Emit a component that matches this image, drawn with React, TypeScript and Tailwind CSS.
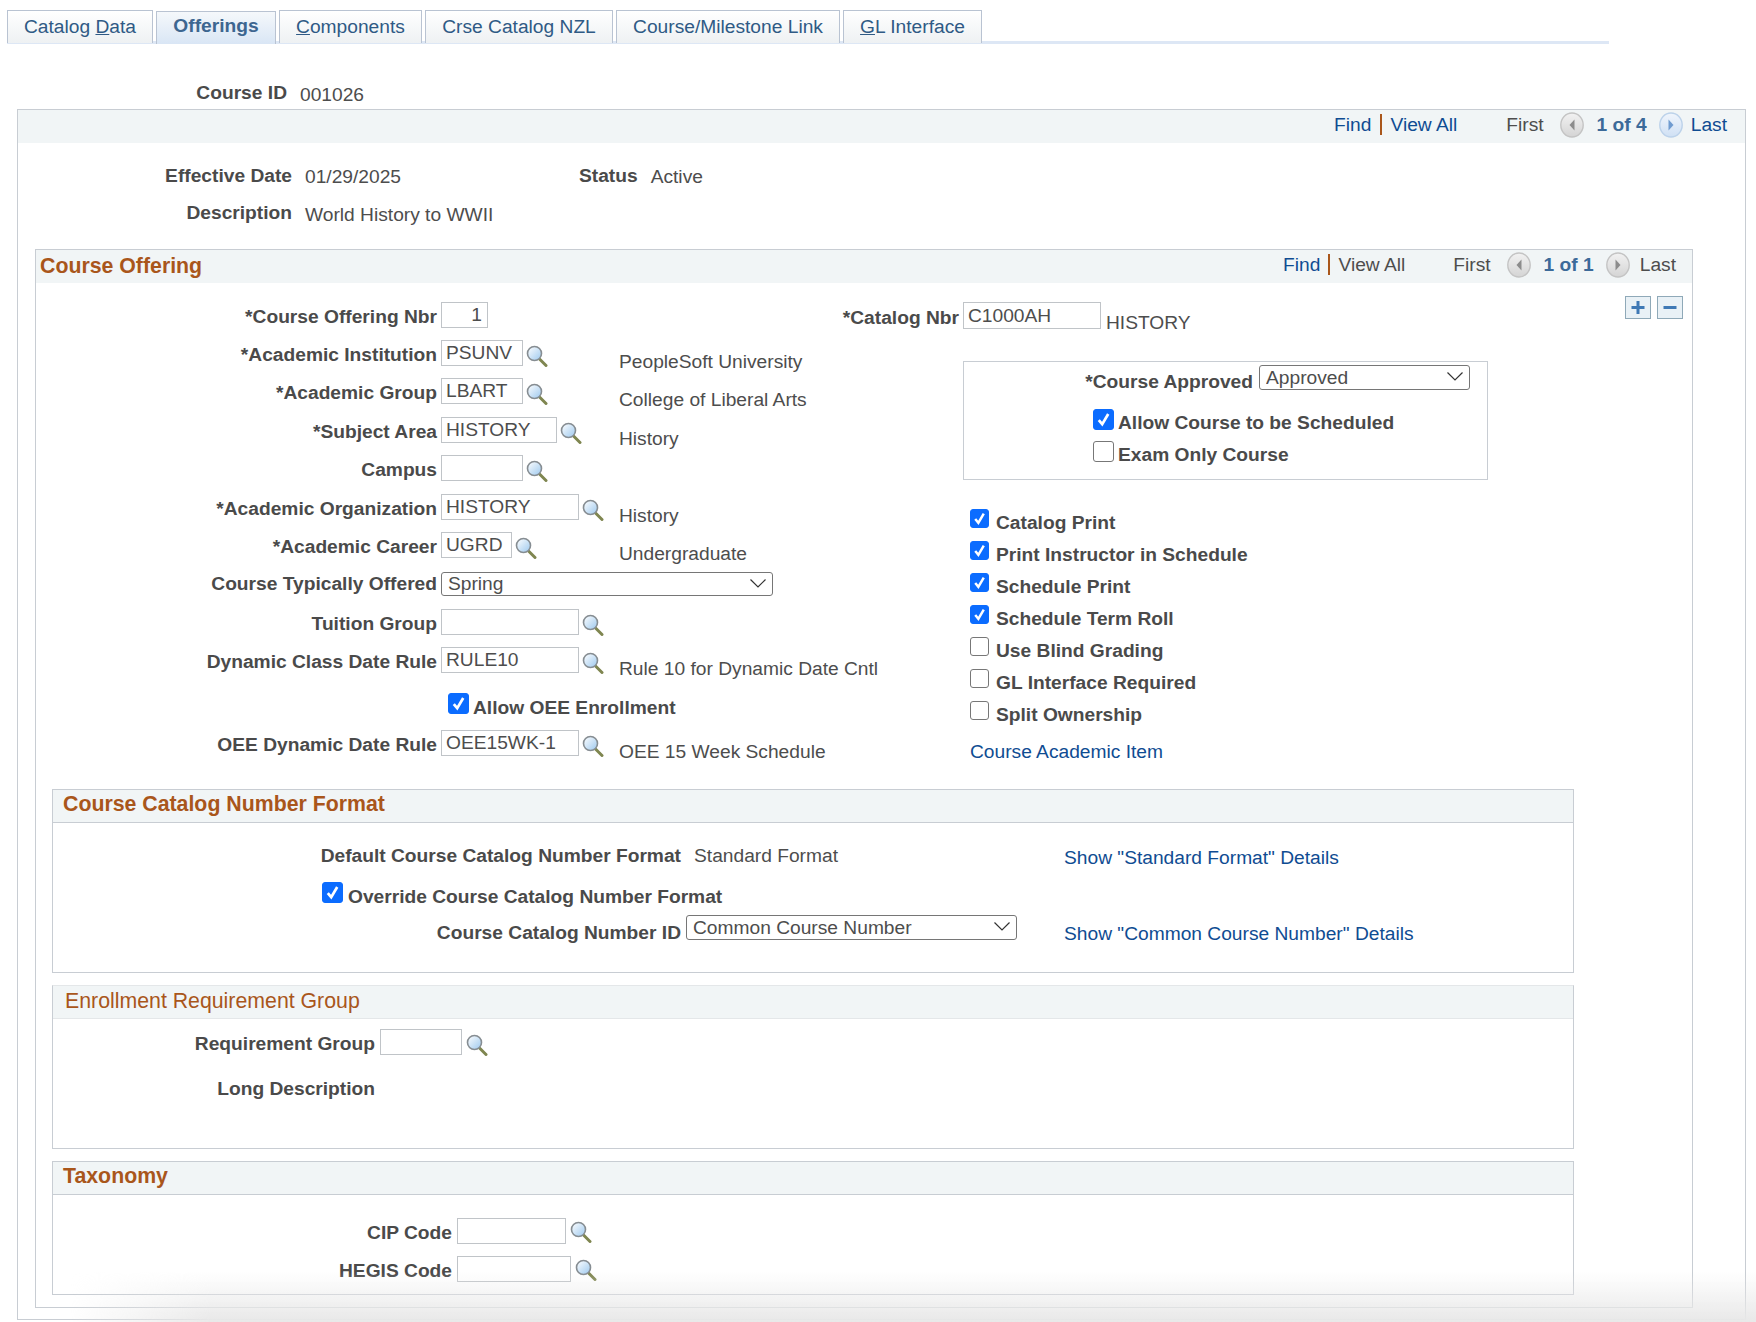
import React from 'react';

const labelCls = 'font-bold text-[#4a4a4a] leading-[22px] text-right shrink-0 whitespace-nowrap';
const linkCls = 'text-[#0f4c92] leading-[22px] whitespace-nowrap';

function Lookup({ className = '' }: { className?: string }) {
  return (
    <svg viewBox="0 0 22 22" className={`w-[22px] h-[22px] shrink-0 ${className}`}>
      <defs>
        <linearGradient id="lens" x1="0" y1="0" x2="1" y2="1">
          <stop offset="0" stopColor="#ffffff" />
          <stop offset="1" stopColor="#9cc8ee" />
        </linearGradient>
      </defs>
      <line x1="13.5" y1="14" x2="20" y2="20.5" stroke="#7f8650" strokeWidth="3" strokeLinecap="round" />
      <circle cx="8.5" cy="8.5" r="7" fill="url(#lens)" stroke="#868d92" strokeWidth="1.6" />
    </svg>
  );
}

function RoundBtn({ dir, active = false }: { dir: 'prev' | 'next'; active?: boolean }) {
  const id = `${dir}${active ? 'a' : 'g'}`;
  return (
    <svg viewBox="0 0 24 26" className="w-[24px] h-[26px] shrink-0">
      <defs>
        <linearGradient id={id} x1="0" y1="0" x2="0" y2="1">
          <stop offset="0" stopColor={active ? '#f0f5fc' : '#f2f2f2'} />
          <stop offset="1" stopColor={active ? '#cfe0f4' : '#d4d4d4'} />
        </linearGradient>
      </defs>
      <ellipse cx="12" cy="13" rx="11.2" ry="12" fill={`url(#${id})`} stroke={active ? '#bcd2ea' : '#c4c4c4'} strokeWidth="1.4" />
      {dir === 'prev' ? (
        <path d="M14.5 7.5 L9.5 13 L14.5 18.5 Z" fill={active ? '#6f9bd0' : '#8c8c8c'} />
      ) : (
        <path d="M9.5 7.5 L14.5 13 L9.5 18.5 Z" fill={active ? '#6f9bd0' : '#8c8c8c'} />
      )}
    </svg>
  );
}

function Nav({ count, linked, pr }: { count: string; linked: boolean; pr: string }) {
  return (
    <div className={`flex items-center ${pr}`}>
      <span className="text-[#0f4c92]">Find</span>
      <span className={`${linked ? 'ml-[9px]' : 'ml-[8px]'} w-[2px] h-[21px] bg-[#a9561b]`} />
      <span className={`ml-[8px] ${linked ? 'text-[#0f4c92]' : 'text-[#4d4d4d]'}`}>View All</span>
      <span className={`${linked ? 'ml-[49px]' : 'ml-[48px]'} text-[#4d4d4d]`}>First</span>
      <span className="ml-[16px]">
        <RoundBtn dir="prev" />
      </span>
      <span className="ml-[13px] font-bold text-[#3c6a99]">{count}</span>
      <span className="ml-[12px]">
        <RoundBtn dir="next" active={linked} />
      </span>
      <span className={`${linked ? 'ml-[8px] text-[#0f4c92]' : 'ml-[10px] text-[#4d4d4d]'}`}>Last</span>
    </div>
  );
}

function TextBox({ value = '', className = '' }: { value?: string; className?: string }) {
  return (
    <input
      readOnly
      value={value}
      className={`h-[26px] shrink-0 border border-[#c0c4c8] pl-[4px] pt-[1px] text-[#4d4d4d] bg-white outline-none ${className}`}
    />
  );
}

function Dropdown({ value, className = '' }: { value: string; className?: string }) {
  return (
    <span className={`relative block shrink-0 ${className}`}>
      <select
        defaultValue={value}
        className="appearance-none block w-full h-full border border-[#767676] rounded-[3px] pl-[6px] py-0 leading-[20px] text-[#4d4d4d] bg-white outline-none"
      >
        <option>{value}</option>
      </select>
      <svg viewBox="0 0 16 9" className="absolute right-[7px] top-[7px] w-[16px] h-[9px]">
        <path d="M0.5 0.5 L8 8 L15.5 0.5" fill="none" stroke="#333333" strokeWidth="1.2" />
      </svg>
    </span>
  );
}

function Check({ checked = false, size = 'w-[19px] h-[19px]' }: { checked?: boolean; size?: string }) {
  return (
    <span className={`relative block shrink-0 ${size}`}>
      <input
        type="checkbox"
        readOnly
        checked={checked}
        className={`appearance-none block w-full h-full rounded-[3px] border ${
          checked ? 'bg-[#0b6cff] border-[#0b6cff]' : 'bg-white border-[#777777]'
        }`}
      />
      {checked && (
        <svg viewBox="0 0 20 20" className="absolute inset-0 w-full h-full">
          <path d="M5.5 10.5 L8.8 14.5 L14.5 4.8" fill="none" stroke="#ffffff" strokeWidth="2.6" />
        </svg>
      )}
    </span>
  );
}

type RowProps = {
  label: string;
  value?: string;
  inputW: string;
  desc?: string;
  h: string;
  align?: string;
  lookup?: boolean;
};

function FormRow({ label, value, inputW, desc, h, align = '', lookup = true }: RowProps) {
  return (
    <div className={`flex items-start ${h}`}>
      <span className={`${labelCls} w-[401px] mt-[4px]`}>{label}</span>
      <div className="flex items-start w-[178px] ml-[4px] shrink-0">
        <TextBox value={value} className={`${inputW} ${align}`} />
        {lookup && <Lookup className="ml-[3px] mt-[5px]" />}
      </div>
      {desc && <span className="mt-[11px] leading-[22px] text-[#4d4d4d] whitespace-nowrap">{desc}</span>}
    </div>
  );
}

function Section({ title, bold = true, light = false, children }: { title: string; bold?: boolean; light?: boolean; children: React.ReactNode }) {
  return (
    <div className={`border border-[#c8cdd3] w-[1522px] ml-[16px] ${light ? 'border-t-[#e4e7e9]' : ''}`}>
      <div
        className={`h-[33px] bg-[#f1f5f6] border-b flex items-center text-[21.3px] text-[#a9561b] ${
          light ? 'border-[#e4e7e9] pl-[12px]' : 'border-[#c8cdd3] pl-[10px] pb-[2px]'
        } ${bold ? 'font-bold' : ''}`}
      >
        {title}
      </div>
      {children}
    </div>
  );
}

const tabs = [
  { w: 'w-[146px]', text: <>Catalog <u>D</u>ata</> },
  { w: 'w-[120px]', text: <>Offerings</>, active: true },
  { w: 'w-[143px]', text: <><u>C</u>omponents</> },
  { w: 'w-[188px]', text: <>Crse Catalog NZL</> },
  { w: 'w-[224px]', text: <>Course/Milestone Link</> },
  { w: 'w-[139px]', text: <><u>G</u>L Interface</> },
];

const checks = [
  { label: 'Catalog Print', on: true },
  { label: 'Print Instructor in Schedule', on: true },
  { label: 'Schedule Print', on: true },
  { label: 'Schedule Term Roll', on: true },
  { label: 'Use Blind Grading', on: false },
  { label: 'GL Interface Required', on: false },
  { label: 'Split Ownership', on: false },
];

export default function App() {
  return (
    <div className="relative h-[1322px] overflow-hidden bg-white text-[19.2px] text-[#4d4d4d] [font-family:'Liberation_Sans',Arial,sans-serif]">
      {/* Tabs */}
      <div className="ml-[7px] w-[1602px] h-[44px] pt-[10px] flex gap-[3px] border-b-[3px] border-[#dde7f5]">
        {tabs.map((t, i) => (
          <div
            key={i}
            className={`${t.w} h-[33px] flex items-center justify-center border border-b-0 border-[#b9c3d2] text-[#2f5a85] ${
              t.active
                ? 'mt-[1px] pb-[3px] font-bold text-[#3d6690] bg-gradient-to-b from-[#f5f8fb] to-[#d9e6f5]'
                : 'bg-gradient-to-b from-white to-[#eef1f3]'
            }`}
          >
            <span>{t.text}</span>
          </div>
        ))}
      </div>

      {/* Course ID */}
      <div className="flex mt-[38px] h-[27px]">
        <span className={`${labelCls} w-[287px]`}>Course ID</span>
        <span className="ml-[13px] mt-[2px] leading-[22px]">001026</span>
      </div>

      {/* Outer panel */}
      <div className="ml-[17px] w-[1729px] h-[1211px] border border-[#c8cdd3]">
        <div className="h-[33px] pb-[3px] bg-[#f1f5f6] flex items-center justify-end">
          <Nav count="1 of 4" linked pr="pr-[18px]" />
        </div>

        <div className="flex pt-[22px] h-[59px]">
          <span className={`${labelCls} w-[274px]`}>Effective Date</span>
          <span className="ml-[13px] w-[274px] mt-[1px] leading-[22px]">01/29/2025</span>
          <span className={labelCls}>Status</span>
          <span className="ml-[13px] mt-[1px] leading-[22px]">Active</span>
        </div>
        <div className="flex h-[47px]">
          <span className={`${labelCls} w-[274px]`}>Description</span>
          <span className="ml-[13px] mt-[2px] leading-[22px]">World History to WWII</span>
        </div>

        {/* Course Offering */}
        <div className="ml-[17px] w-[1658px] border border-[#c8cdd3]">
          <div className="h-[33px] bg-[#f1f5f6] flex items-center justify-between pl-[4px]">
            <span className="font-bold text-[21.3px] text-[#a9561b]">Course Offering</span>
            <div className="pb-[3px]">
              <Nav count="1 of 1" linked={false} pr="pr-[16px]" />
            </div>
          </div>

          <div className="flex pt-[12px]">
            {/* Left column */}
            <div className="w-[804px] pt-[7px] shrink-0">
              <FormRow label="*Course Offering Nbr" value="1" inputW="w-[47px]" align="text-right pr-[5px]" h="h-[38px]" lookup={false} />
              <FormRow label="*Academic Institution" value="PSUNV" inputW="w-[82px]" desc="PeopleSoft University" h="h-[38px]" />
              <FormRow label="*Academic Group" value="LBART" inputW="w-[82px]" desc="College of Liberal Arts" h="h-[39px]" />
              <FormRow label="*Subject Area" value="HISTORY" inputW="w-[116px]" desc="History" h="h-[38px]" />
              <FormRow label="Campus" inputW="w-[82px]" h="h-[39px]" />
              <FormRow label="*Academic Organization" value="HISTORY" inputW="w-[138px]" desc="History" h="h-[38px]" />
              <FormRow label="*Academic Career" value="UGRD" inputW="w-[71px]" desc="Undergraduate" h="h-[40px]" />
              <div className="flex items-start h-[37px]">
                <span className={`${labelCls} w-[401px] mt-[1px]`}>Course Typically Offered</span>
                <Dropdown value="Spring" className="ml-[4px] w-[332px] h-[24px]" />
              </div>
              <FormRow label="Tuition Group" inputW="w-[138px]" h="h-[38px]" />
              <FormRow label="Dynamic Class Date Rule" value="RULE10" inputW="w-[138px]" desc="Rule 10 for Dynamic Date Cntl" h="h-[46px]" />
              <div className="flex items-start h-[37px] pl-[412px]">
                <Check checked size="w-[21px] h-[21px]" />
                <span className="ml-[4px] mt-[4px] font-bold text-[#4a4a4a] leading-[22px]">Allow OEE Enrollment</span>
              </div>
              <FormRow label="OEE Dynamic Date Rule" value="OEE15WK-1" inputW="w-[138px]" desc="OEE 15 Week Schedule" h="h-[59px]" />
            </div>

            {/* Right column */}
            <div className="pt-[7px] w-[660px] shrink-0">
              <div className="flex items-start">
                <span className={`${labelCls} w-[119px] mt-[5px]`}>*Catalog Nbr</span>
                <TextBox value="C1000AH" className="ml-[4px] w-[138px] !h-[27px]" />
                <span className="ml-[5px] mt-[10px] leading-[22px]">HISTORY</span>
              </div>

              <div className="ml-[123px] mt-[27px] w-[525px] h-[119px] border border-[#c8cdd3] pt-[3px]">
                <div className="flex items-start">
                  <span className={`${labelCls} w-[289px] mt-[6px]`}>*Course Approved</span>
                  <Dropdown value="Approved" className="ml-[6px] w-[211px] h-[25px]" />
                </div>
                <div className="flex items-start ml-[129px] mt-[16px] h-[32px]">
                  <Check checked size="w-[21px] h-[21px]" />
                  <span className="ml-[4px] mt-[3px] font-bold text-[#4a4a4a] leading-[22px]">Allow Course to be Scheduled</span>
                </div>
                <div className="flex items-start ml-[129px] h-[32px]">
                  <Check size="w-[21px] h-[21px]" />
                  <span className="ml-[4px] mt-[3px] font-bold text-[#4a4a4a] leading-[22px]">Exam Only Course</span>
                </div>
              </div>

              <div className="ml-[130px] mt-[29px]">
                {checks.map((c) => (
                  <div key={c.label} className="flex items-start h-[32px]">
                    <Check checked={c.on} />
                    <span className="ml-[7px] mt-[3px] font-bold text-[#4a4a4a] leading-[22px]">{c.label}</span>
                  </div>
                ))}
                <div className={`${linkCls} mt-[8px]`}>Course Academic Item</div>
              </div>
            </div>

            {/* Add / remove row */}
            <div className="flex gap-[6px] ml-[125px] mt-[1px] h-[23px]">
              <svg viewBox="0 0 26 23" className="w-[26px] h-[23px]">
                <rect x="0.5" y="0.5" width="25" height="22" fill="#e9f1f6" stroke="#8fa9b8" />
                <path d="M13 5 V18 M6.5 11.5 H19.5" stroke="#3f79b5" strokeWidth="3" />
              </svg>
              <svg viewBox="0 0 26 23" className="w-[26px] h-[23px]">
                <rect x="0.5" y="0.5" width="25" height="22" fill="#e9f1f6" stroke="#8fa9b8" />
                <path d="M6.5 11.5 H19.5" stroke="#3f79b5" strokeWidth="3" />
              </svg>
            </div>
          </div>

          {/* Course Catalog Number Format */}
          <Section title="Course Catalog Number Format">
            <div className="h-[149px] pt-[22px]">
              <div className="flex h-[37px]">
                <span className={`${labelCls} w-[628px]`}>Default Course Catalog Number Format</span>
                <span className="ml-[13px] w-[370px] leading-[22px]">Standard Format</span>
                <span className={`${linkCls} mt-[2px]`}>Show "Standard Format" Details</span>
              </div>
              <div className="flex items-start h-[33px] ml-[269px]">
                <Check checked size="w-[21px] h-[21px]" />
                <span className="ml-[5px] mt-[4px] font-bold text-[#4a4a4a] leading-[22px]">Override Course Catalog Number Format</span>
              </div>
              <div className="flex items-start">
                <span className={`${labelCls} w-[628px] mt-[7px]`}>Course Catalog Number ID</span>
                <Dropdown value="Common Course Number" className="ml-[5px] w-[331px] h-[25px]" />
                <span className={`${linkCls} ml-[47px] mt-[8px]`}>Show "Common Course Number" Details</span>
              </div>
            </div>
          </Section>

          {/* Enrollment Requirement Group */}
          <div className="mt-[12px]">
            <Section title="Enrollment Requirement Group" bold={false} light>
              <div className="h-[129px] pt-[10px]">
                <div className="flex items-start">
                  <span className={`${labelCls} w-[322px] mt-[4px]`}>Requirement Group</span>
                  <TextBox className="ml-[5px] w-[82px]" />
                  <Lookup className="ml-[4px] mt-[5px]" />
                </div>
                <div className="flex mt-[22px]">
                  <span className={`${labelCls} w-[322px]`}>Long Description</span>
                </div>
              </div>
            </Section>
          </div>

          {/* Taxonomy */}
          <div className="mt-[12px] mb-[12px]">
            <Section title="Taxonomy">
              <div className="h-[99px] pt-[23px]">
                <div className="flex items-start h-[38px]">
                  <span className={`${labelCls} w-[399px] mt-[4px]`}>CIP Code</span>
                  <TextBox className="ml-[5px] w-[109px]" />
                  <Lookup className="ml-[4px] mt-[3px]" />
                </div>
                <div className="flex items-start">
                  <span className={`${labelCls} w-[399px] mt-[4px]`}>HEGIS Code</span>
                  <TextBox className="ml-[5px] w-[114px]" />
                  <Lookup className="ml-[4px] mt-[3px]" />
                </div>
              </div>
            </Section>
          </div>
        </div>
      </div>

      {/* Shadow along the bottom of the capture */}
      <div className="absolute left-0 right-0 bottom-0 h-[50px] pointer-events-none bg-gradient-to-t from-[#e8e8e8] to-transparent [mask-image:linear-gradient(to_right,transparent_4%,black_12%)]" />
    </div>
  );
}
